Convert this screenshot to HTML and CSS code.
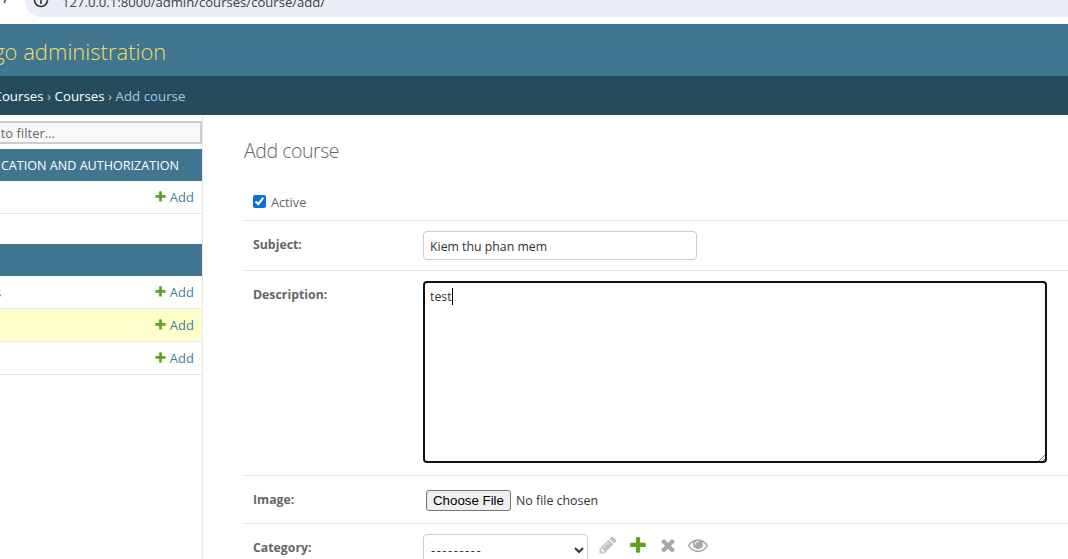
FILE: index.html

```html
<!DOCTYPE html>
<html>
<head>
  <title>Add course</title>
  <link rel="stylesheet" href="styles.css">
</head>
<body>
  <div class="chrome">
    <svg class="chrome-back" width="12" height="12" viewBox="0 0 12 12"><path d="M-2 3 A5 5 0 0 1 6 -1" fill="none" stroke="#444" stroke-width="1.5"/></svg>
    <div class="omnibox">
      <svg class="chrome-info" width="16" height="10" viewBox="0 0 16 10"><circle cx="8" cy="0" r="6.5" fill="none" stroke="#333" stroke-width="1.6"/><path d="M8 0v4" stroke="#333" stroke-width="1.6"/></svg>
      <span class="url">127.0.0.1:8000/admin/courses/course/add/</span>
    </div>
  </div>

  <div class="header"><span>Django administration</span></div>
  <div class="breadcrumbs">
    <span><a>Home</a> › <a>Courses</a> › <a>Courses</a> › <em>Add course</em></span>
  </div>

  <div class="layout">
    <div class="sidebar">
      <div class="filter"><input class="filter-input" type="text" placeholder="Start typing to filter..."></div>

      <div class="caption"><span>AUTHENTICATION AND AUTHORIZATION</span></div>
      <div class="row">
        <a class="add-link"><svg width="13" height="13" viewBox="0 0 1792 1792"><path fill="#5fa225" d="M1600 796v192q0 40-28 68t-68 28h-416v416q0 40-28 68t-68 28h-192q-40 0-68-28t-28-68v-416h-416q-40 0-68-28t-28-68v-192q0-40 28-68t68-28h416v-416q0-40 28-68t68-28h192q40 0 68 28t28 68v416h416q40 0 68 28t28 68z"/></svg>Add</a>
      </div>
      <div class="row-empty"></div>

      <div class="caption"></div>
      <div class="row">
        <a class="row-name">Categorys</a>
        <a class="add-link"><svg width="13" height="13" viewBox="0 0 1792 1792"><path fill="#5fa225" d="M1600 796v192q0 40-28 68t-68 28h-416v416q0 40-28 68t-68 28h-192q-40 0-68-28t-28-68v-416h-416q-40 0-68-28t-28-68v-192q0-40 28-68t68-28h416v-416q0-40 28-68t68-28h192q40 0 68 28t28 68v416h416q40 0 68 28t28 68z"/></svg>Add</a>
      </div>
      <div class="row current">
        <a class="add-link"><svg width="13" height="13" viewBox="0 0 1792 1792"><path fill="#5fa225" d="M1600 796v192q0 40-28 68t-68 28h-416v416q0 40-28 68t-68 28h-192q-40 0-68-28t-28-68v-416h-416q-40 0-68-28t-28-68v-192q0-40 28-68t68-28h416v-416q0-40 28-68t68-28h192q40 0 68 28t28 68v416h416q40 0 68 28t28 68z"/></svg>Add</a>
      </div>
      <div class="row">
        <a class="add-link"><svg width="13" height="13" viewBox="0 0 1792 1792"><path fill="#5fa225" d="M1600 796v192q0 40-28 68t-68 28h-416v416q0 40-28 68t-68 28h-192q-40 0-68-28t-28-68v-416h-416q-40 0-68-28t-28-68v-192q0-40 28-68t68-28h416v-416q0-40 28-68t68-28h192q40 0 68 28t28 68v416h416q40 0 68 28t28 68z"/></svg>Add</a>
      </div>
    </div>

    <div class="content">
      <h1>Add course</h1>
      <div class="form-row row-active">
        <input class="check" type="checkbox" checked>
        <label class="check-label">Active</label>
      </div>
      <div class="form-row row-subject">
        <label class="field-label">Subject:</label>
        <input class="text-input" type="text" value="Kiem thu phan mem">
      </div>
      <div class="form-row row-description">
        <label class="field-label">Description:</label>
        <div class="textarea-box">test<span class="caret"></span></div>
      </div>
      <div class="form-row row-image">
        <label class="field-label">Image:</label>
        <input class="file-input" type="file">
      </div>
      <div class="form-row row-category">
        <label class="field-label">Category:</label>
        <select class="select"><option>---------</option></select>
        <div class="related">
          <svg width="20" height="20" viewBox="0 0 1792 1792"><path fill="#c4c4c4" d="M491 1536l91-91-235-235-91 91v107h128v128h107zm523-928q0-22-22-22-10 0-17 7l-542 542q-7 7-7 17 0 22 22 22 10 0 17-7l542-542q7-7 7-17zm-54-192l416 416-832 832h-416v-416zm683 96q0 53-37 90l-166 166-416-416 166-165q36-38 90-38 53 0 91 38l235 234q37 39 37 91z"/></svg>
          <svg width="20" height="20" viewBox="0 0 1792 1792"><path fill="#5fa225" d="M1600 796v192q0 40-28 68t-68 28h-416v416q0 40-28 68t-68 28h-192q-40 0-68-28t-28-68v-416h-416q-40 0-68-28t-28-68v-192q0-40 28-68t68-28h416v-416q0-40 28-68t68-28h192q40 0 68 28t28 68v416h416q40 0 68 28t28 68z"/></svg>
          <svg width="20" height="20" viewBox="0 0 1792 1792"><path fill="#a8a8a8" d="M1490 1322q0 40-28 68l-136 136q-28 28-68 28t-68-28l-294-294-294 294q-28 28-68 28t-68-28l-136-136q-28-28-28-68t28-68l294-294-294-294q-28-28-28-68t28-68l136-136q28-28 68-28t68 28l294 294 294-294q28-28 68-28t68 28l136 136q28 28 28 68t-28 68l-294 294 294 294q28 28 28 68z"/></svg>
          <svg width="20" height="20" viewBox="0 0 1792 1792"><path fill="#a8a8a8" d="M1664 960q-152-236-381-353 61 104 61 225 0 185-131.500 316.500t-316.500 131.500-316.500-131.500-131.500-316.500q0-121 61-225-229 117-381 353 133 205 333.500 326.500t434.500 121.500 434.500-121.500 333.500-326.500zm-720-384q0-20-14-34t-34-14q-125 0-214.500 89.500t-89.500 214.500q0 20 14 34t34 14 34-14 14-34q0-86 61-147t147-61q20 0 34-14t14-34zm848 384q0 34-20 69-140 230-376.500 368.500t-499.500 138.500-499.500-139-376.500-368q-20-35-20-69t20-69q140-229 376.500-368t499.500-139 499.500 139 376.500 368q20 35 20 69z"/></svg>
        </div>
      </div>
    </div>
  </div>
</body>
</html>
```

FILE: styles.css

```css
html, body {
  height: 100%;
}

body {
  margin: 0;
  overflow: hidden;
  background-color: #fff;
  color: #333;
  font-family: "Open Sans", "Noto Sans", sans-serif;
  font-size: 13px;
}

/* browser strip, cut off at the top of the shot */
.chrome {
  height: 24px;
  display: flex;
  background-color: #fff;
  overflow: hidden;
}

.chrome-back {
  width: 25px;
  flex: none;
}

.omnibox {
  flex: 1;
  height: 17px;
  display: flex;
  align-items: flex-end;
  background-color: #e9eef8;
  border-bottom-left-radius: 16px;
  overflow: hidden;
}

.chrome-info {
  margin: 0 13px 7px 8px;
  flex: none;
}

.url {
  font-size: 13.1px;
  line-height: 14px;
  color: #3c4043;
  margin-bottom: 8px;
}

.header {
  height: 52px;
  display: flex;
  align-items: center;
  padding-top: 2px;
  box-sizing: border-box;
  background-color: #417690;
  color: #f5dd5d;
  font-size: 22px;
  font-weight: 300;
  white-space: nowrap;
  overflow: hidden;
}

.header span {
  margin-left: -52px;
}

.breadcrumbs {
  height: 39px;
  display: flex;
  align-items: center;
  background-color: #264b5d;
  color: #aac3d2;
  font-size: 13.3px;
  white-space: nowrap;
  overflow: hidden;
}

.breadcrumbs span {
  margin-left: -55px;
}

.breadcrumbs a {
  color: #fff;
}

.breadcrumbs em {
  font-style: normal;
  color: #9ccbe8;
}

.layout {
  display: flex;
}

.sidebar {
  width: 202px;
  height: 444px;
  flex: none;
  border-right: 1px solid #e8e8e8;
}

.filter {
  height: 34px;
  padding-top: 6px;
  box-sizing: border-box;
  overflow: hidden;
}

.filter-input {
  display: block;
  width: 300px;
  height: 23px;
  margin-left: -98px;
  box-sizing: border-box;
  border: 2px solid #ccc;
  background-color: #f8f8f8;
  font-family: inherit;
  font-size: 13px;
  text-align: right;
  padding: 0 145px 0 0;
}

.filter-input::placeholder {
  color: #666;
}

.caption {
  height: 32px;
  display: flex;
  align-items: center;
  justify-content: flex-end;
  padding-right: 23px;
  background-color: #417690;
  color: #fff;
  font-size: 12.6px;
  font-weight: 500;
  white-space: nowrap;
  overflow: hidden;
}

.row {
  height: 33px;
  box-sizing: border-box;
  display: flex;
  align-items: center;
  justify-content: flex-end;
  padding-right: 8px;
  border-bottom: 1px solid #e8e8e8;
}

.row.current {
  background-color: #ffc;
}

.row-name {
  margin-right: auto;
  margin-left: -59px;
  color: #447e9b;
  white-space: nowrap;
}

.row-empty {
  height: 30px;
}

.add-link {
  display: flex;
  align-items: center;
  gap: 3px;
  color: #447e9b;
}

.add-link svg {
  margin-top: -2px;
}

.content {
  flex: 1;
  padding-left: 40px;
  min-width: 0;
}

h1 {
  margin: 0;
  padding: 24px 0 0 1px;
  height: 45px;
  font-size: 19.5px;
  letter-spacing: -0.45px;
  line-height: 24px;
  font-weight: 300;
  color: #666;
}

.form-row {
  display: flex;
  box-sizing: border-box;
  border-bottom: 1px solid #e8e8e8;
  padding-left: 10px;
}

.row-active {
  height: 37px;
  align-items: center;
  padding-bottom: 1px;
}

.check {
  width: 13px;
  height: 13px;
  margin: 0 4px 0 0;
  accent-color: #0b6fe0;
}

.check-label {
  color: #666;
  margin-left: 1px;
  font-size: 12.7px;
}

.field-label {
  width: 170px;
  flex: none;
  font-weight: 700;
  font-size: 12.3px;
  color: #666;
}

.row-subject {
  height: 50px;
  padding-top: 15px;
}

.text-input {
  width: 274px;
  height: 29px;
  margin-top: -5px;
  box-sizing: border-box;
  border: 1px solid #ccc;
  border-radius: 4px;
  padding: 2px 6px 0;
  font-family: inherit;
  font-size: 12.3px;
  color: #333;
}

.row-description {
  height: 205px;
  padding-top: 15px;
}

.textarea-box {
  width: 624px;
  height: 182px;
  margin-top: -5px;
  box-sizing: border-box;
  border: 2px solid #111;
  border-radius: 4px;
  padding: 4px 5px;
  font-size: 12.3px;
  line-height: 20px;
  color: #333;
  position: relative;
}

/* resize grip */
.textarea-box::after {
  content: "";
  position: absolute;
  right: 0;
  bottom: 0;
  width: 9px;
  height: 9px;
  background: repeating-linear-gradient(135deg, transparent 0 2px, #777 2px 3px);
  clip-path: polygon(100% 0, 100% 100%, 0 100%);
}

.caret {
  display: inline-block;
  width: 1px;
  height: 17px;
  background-color: #000;
  vertical-align: -4px;
}

.row-image {
  height: 48px;
  padding-top: 15px;
}

.file-input {
  margin: -1px 0 0 3px;
  height: 21px;
  font-family: inherit;
  font-size: 12.4px;
  color: #333;
}

.file-input::file-selector-button {
  font-family: "Liberation Sans", sans-serif;
  font-size: 13.3px;
  height: 21px;
  color: #000;
  padding: 0 6px;
  margin-right: 5px;
  border: 1px solid #767676;
  border-radius: 3px;
  background-color: #efefef;
}

.row-category {
  padding-top: 15px;
  border-bottom: 0;
}

.select {
  width: 165px;
  height: 32px;
  margin-top: -5px;
  box-sizing: border-box;
  border: 1px solid #ccc;
  border-radius: 4px;
  background-color: #fff;
  padding: 0 3px;
  font-family: inherit;
  font-size: 13px;
  letter-spacing: 1.5px;
  color: #333;
}

.related {
  display: flex;
  gap: 10px;
  margin: -4px 0 0 10px;
  height: 20px;
}
```
